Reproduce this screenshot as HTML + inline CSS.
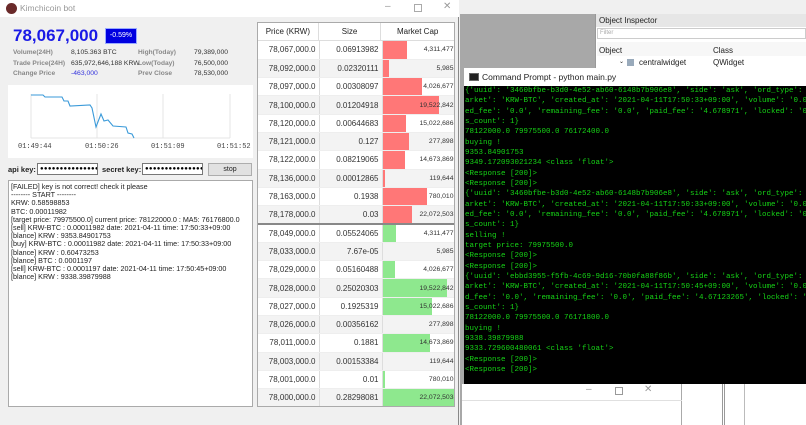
<!DOCTYPE html>
<html><head><meta charset="utf-8"><style>
*{margin:0;padding:0;box-sizing:border-box}
body{width:806px;height:425px;overflow:hidden;position:relative;background:#f0f0f0;font-family:"Liberation Sans",sans-serif}
.a{position:absolute}
.cmd div{height:10.33px;line-height:10.33px;white-space:pre;font-family:"Liberation Mono",monospace;font-size:7.5px;color:#16d416}
.lbl{font-size:6.6px;color:#888;font-weight:bold;white-space:nowrap}
.val{font-size:6.8px;color:#333;white-space:nowrap}
.log div{font-size:7.2px;line-height:8.2px;color:#222;white-space:pre}
table{border-collapse:collapse;font-size:8px;color:#333;table-layout:fixed}
td{height:18.3px;border-right:1px solid #ddd;border-bottom:1px solid #eee;padding:0 3px 0 0;text-align:right;position:relative;white-space:nowrap;overflow:hidden}
tr:nth-child(even) td{background:#f3f3f3}
td.mc{font-size:6.8px;padding-right:1px}
.bar{position:absolute;left:0;top:0;bottom:0}
.mc span{position:relative}
</style></head><body>
<div class="a" style="left:460px;top:0;width:346px;height:14px;background:#f0f0f0"></div>
<div class="a" style="left:460px;top:14px;width:135px;height:411px;background:#a8a8a8"></div>
<div class="a" style="left:595px;top:14px;width:211px;height:411px;background:#fff;border-left:1px solid #999"></div>
<div class="a" style="left:596px;top:14px;width:210px;height:13px;background:#e6e6e6;font-size:8px;padding:2px 3px;color:#222">Object Inspector</div>
<div class="a" style="left:597px;top:28px;width:209px;height:11px;border:1px solid #ccc;font-size:6px;color:#aaa;padding:1px 2px">Filter</div>
<div class="a" style="left:597px;top:42px;width:209px;height:14px;background:#f7f7f7;font-size:8px;color:#222"><span class="a" style="left:2px;top:4px">Object</span><span class="a" style="left:116px;top:4px">Class</span></div>
<div class="a" style="left:597px;top:56px;width:209px;height:12px;font-size:8px;color:#222"><span class="a" style="left:22px;top:2px;font-size:6px">⌄</span><span class="a" style="left:30px;top:3px;width:7px;height:7px;background:#9ab"></span><span class="a" style="left:42px;top:2px">centralwidget</span><span class="a" style="left:116px;top:2px">QWidget</span></div>
<div class="a" style="left:722px;top:384px;width:3px;height:41px;border-left:1px solid #999;border-right:1px solid #999"></div>
<div class="a" style="left:744px;top:384px;width:1px;height:41px;background:#bbb"></div>
<div class="a" style="left:462px;top:384px;width:220px;height:41px;background:#fff;border-right:1px solid #aaa"></div>
<div class="a" style="left:462px;top:384px;width:220px;height:17px;border-bottom:1px solid #e0e0e0;font-size:10px;color:#999"><span class="a" style="left:124px;top:0">–</span><span class="a" style="left:153px;top:3px;width:8px;height:8px;border:1px solid #999"></span><span class="a" style="left:182px;top:0">✕</span></div>
<div class="a" style="left:464px;top:68px;width:342px;height:18px;background:#fff;font-size:8.5px;color:#222;padding:4px 0 0 18px">Command Prompt - python  main.py<span class="a" style="left:5px;top:5px;width:10px;height:8px;background:#222;border:1px solid #666"></span></div>
<div class="a cmd" style="left:464px;top:86px;width:342px;height:298px;background:#000;padding:0 0 0 1px;overflow:hidden">
<div>{'uuid': '3460bfbe-b3d0-4e52-ab60-6148b7b906e8', 'side': 'ask', 'ord_type': '</div>
<div>arket': 'KRW-BTC', 'created_at': '2021-04-11T17:50:33+09:00', 'volume': '0.00</div>
<div>ed_fee': '0.0', 'remaining_fee': '0.0', 'paid_fee': '4.678971', 'locked': '0.</div>
<div>s_count': 1}</div>
<div>78122000.0 79975500.0 76172400.0</div>
<div>buying !</div>
<div>9353.84901753</div>
<div>9349.172093021234 &lt;class 'float'&gt;</div>
<div>&lt;Response [200]&gt;</div>
<div>&lt;Response [200]&gt;</div>
<div>{'uuid': '3460bfbe-b3d0-4e52-ab60-6148b7b906e8', 'side': 'ask', 'ord_type': '</div>
<div>arket': 'KRW-BTC', 'created_at': '2021-04-11T17:50:33+09:00', 'volume': '0.00</div>
<div>ed_fee': '0.0', 'remaining_fee': '0.0', 'paid_fee': '4.678971', 'locked': '0.</div>
<div>s_count': 1}</div>
<div>selling !</div>
<div>target price: 79975500.0</div>
<div>&lt;Response [200]&gt;</div>
<div>&lt;Response [200]&gt;</div>
<div>{'uuid': 'ebbd3955-f5fb-4c69-9d16-70b0fa88f86b', 'side': 'ask', 'ord_type': '</div>
<div>arket': 'KRW-BTC', 'created_at': '2021-04-11T17:50:45+09:00', 'volume': '0.00</div>
<div>d_fee': '0.0', 'remaining_fee': '0.0', 'paid_fee': '4.67123265', 'locked': '0</div>
<div>s_count': 1}</div>
<div>78122000.0 79975500.0 76171800.0</div>
<div>buying !</div>
<div>9338.39879988</div>
<div>9333.729600480061 &lt;class 'float'&gt;</div>
<div>&lt;Response [200]&gt;</div>
<div>&lt;Response [200]&gt;</div>
</div>
<div class="a" style="left:0;top:0;width:459px;height:425px;background:#f0f0f0;border-right:1px solid #888"></div>
<div class="a" style="left:0;top:0;width:459px;height:17px;background:#fff;font-size:8.5px;color:#999"><span class="a" style="left:6px;top:3px;width:11px;height:11px;border-radius:50%;background:#6a2a2a"></span><span class="a" style="left:20px;top:3px">Kimchicoin bot</span><span class="a" style="left:385px;top:1px;font-size:10px">–</span><span class="a" style="left:414px;top:4px;width:8px;height:8px;border:1px solid #aaa"></span><span class="a" style="left:443px;top:1px;font-size:10px">✕</span></div>
<div class="a" style="left:13px;top:26px;font-size:17px;font-weight:bold;color:#1a1ae6;white-space:nowrap">78,067,000</div>
<div class="a" style="left:106px;top:29px;width:30px;height:14px;background:#0000e0;color:#fff;font-size:7px;text-align:center;line-height:14px;outline:1px solid #9af">-0.59%</div>
<div class="a lbl" style="left:13px;top:49px">Volume(24H)</div><div class="a val" style="left:71px;top:49px">8,105.363 BTC</div>
<div class="a lbl" style="left:138px;top:49px">High(Today)</div><div class="a val" style="left:194px;top:49px">79,389,000</div>
<div class="a lbl" style="left:13px;top:60px">Trade Price(24H)</div><div class="a val" style="left:71px;top:60px">635,972,646,188 KRW</div>
<div class="a lbl" style="left:138px;top:60px">Low(Today)</div><div class="a val" style="left:194px;top:60px">76,500,000</div>
<div class="a lbl" style="left:13px;top:70px">Change Price</div><div class="a val" style="left:71px;top:70px;color:#33d">-463,000</div>
<div class="a lbl" style="left:138px;top:70px">Prev Close</div><div class="a val" style="left:194px;top:70px">78,530,000</div>
<svg class="a" style="left:8px;top:85px" width="245" height="73" viewBox="8 85 245 73">
<rect x="8" y="85" width="245" height="73" fill="#fff"/>
<g stroke="#e4e4e4" stroke-width="1"><line x1="31" y1="94" x2="31" y2="138"/><line x1="97" y1="94" x2="97" y2="138"/><line x1="163" y1="94" x2="163" y2="138"/><line x1="230" y1="94" x2="230" y2="138"/><line x1="31" y1="138" x2="230" y2="138"/></g>
<polyline fill="none" stroke="#3a9ad9" stroke-width="1.1" points="31,95 43,95 45,97 62,97 64,101 68,101 70,106 90,105 92,108 96,127 101,114 104,121 108,120 113,126 126,127 128,133 132,134 134,138"/>
<g font-family="Liberation Mono,monospace" font-size="7" fill="#444"><text x="18" y="148">01:49:44</text><text x="85" y="148">01:50:26</text><text x="151" y="148">01:51:09</text><text x="217" y="148">01:51:52</text></g>
</svg>
<div class="a" style="left:8px;top:165px;font-size:7.5px;font-weight:bold;color:#222">api key:</div>
<div class="a" style="left:37px;top:163px;width:61px;height:12px;background:#fff;border:1px solid #777;font-size:6px;line-height:10px;padding-left:2px;letter-spacing:.3px;overflow:hidden">●●●●●●●●●●●●●●●</div>
<div class="a" style="left:102px;top:165px;font-size:7.5px;font-weight:bold;color:#222">secret key:</div>
<div class="a" style="left:142px;top:163px;width:61px;height:12px;background:#fff;border:1px solid #777;font-size:6px;line-height:10px;padding-left:2px;letter-spacing:.3px;overflow:hidden">●●●●●●●●●●●●●●●</div>
<div class="a" style="left:208px;top:163px;width:44px;height:13px;background:#e1e1e1;border:1px solid #adadad;font-size:7px;text-align:center;line-height:11px;color:#222">stop</div>
<div class="a log" style="left:8px;top:180px;width:245px;height:227px;background:#fff;border:1px solid #aaa;padding:2px 2px">
<div>[FAILED] key is not correct! check it please</div>
<div>-------- START --------</div>
<div>KRW: 0.58598853</div>
<div>BTC: 0.00011982</div>
<div>[target price: 79975500.0] current price: 78122000.0 : MA5: 76176800.0</div>
<div>[sell] KRW-BTC : 0.00011982 date: 2021-04-11 time: 17:50:33+09:00</div>
<div>[blance] KRW : 9353.84901753</div>
<div>[buy] KRW-BTC : 0.00011982 date: 2021-04-11 time: 17:50:33+09:00</div>
<div>[blance] KRW : 0.60473253</div>
<div>[blance] BTC : 0.0001197</div>
<div>[sell] KRW-BTC : 0.0001197 date: 2021-04-11 time: 17:50:45+09:00</div>
<div>[blance] KRW : 9338.39879988</div>
</div>
<div class="a" style="left:257px;top:22px;width:198px;height:385px;background:#fff;border:1px solid #aaa;overflow:hidden">
<div style="height:18px;display:flex;font-size:8px;color:#222;border-bottom:1px solid #ddd"><div style="width:61px;text-align:center;line-height:18px;border-right:1px solid #ddd">Price (KRW)</div><div style="width:63px;text-align:center;line-height:18px;border-right:1px solid #ddd">Size</div><div style="width:73px;text-align:center;line-height:18px">Market Cap</div></div>
<table style="width:197px">
<colgroup><col style="width:61px"><col style="width:63px"><col style="width:73px"></colgroup>
<tbody>
<tr><td>78,067,000.0</td><td>0.06913982</td><td class="mc"><div class="bar" style="width:24px;background:#f77"></div><span>4,311,477</span></td></tr>
<tr><td>78,092,000.0</td><td>0.02320111</td><td class="mc"><div class="bar" style="width:6px;background:#f77"></div><span>5,985</span></td></tr>
<tr><td>78,097,000.0</td><td>0.00308097</td><td class="mc"><div class="bar" style="width:39px;background:#f77"></div><span>4,026,677</span></td></tr>
<tr><td>78,100,000.0</td><td>0.01204918</td><td class="mc"><div class="bar" style="width:56px;background:#f77"></div><span>19,522,842</span></td></tr>
<tr><td>78,120,000.0</td><td>0.00644683</td><td class="mc"><div class="bar" style="width:23px;background:#f77"></div><span>15,022,686</span></td></tr>
<tr><td>78,121,000.0</td><td>0.127</td><td class="mc"><div class="bar" style="width:26px;background:#f77"></div><span>277,898</span></td></tr>
<tr><td>78,122,000.0</td><td>0.08219065</td><td class="mc"><div class="bar" style="width:22px;background:#f77"></div><span>14,673,869</span></td></tr>
<tr><td>78,136,000.0</td><td>0.00012865</td><td class="mc"><div class="bar" style="width:2px;background:#f77"></div><span>119,644</span></td></tr>
<tr><td>78,163,000.0</td><td>0.1938</td><td class="mc"><div class="bar" style="width:44px;background:#f77"></div><span>780,010</span></td></tr>
<tr><td style="border-bottom:2px solid #888">78,178,000.0</td><td style="border-bottom:2px solid #888">0.03</td><td class="mc" style="border-bottom:2px solid #888"><div class="bar" style="width:29px;background:#f77"></div><span>22,072,503</span></td></tr>
<tr><td>78,049,000.0</td><td>0.05524065</td><td class="mc"><div class="bar" style="width:13px;background:#8ee88e"></div><span>4,311,477</span></td></tr>
<tr><td>78,033,000.0</td><td>7.67e-05</td><td class="mc"><span>5,985</span></td></tr>
<tr><td>78,029,000.0</td><td>0.05160488</td><td class="mc"><div class="bar" style="width:12px;background:#8ee88e"></div><span>4,026,677</span></td></tr>
<tr><td>78,028,000.0</td><td>0.25020303</td><td class="mc"><div class="bar" style="width:64px;background:#8ee88e"></div><span>19,522,842</span></td></tr>
<tr><td>78,027,000.0</td><td>0.1925319</td><td class="mc"><div class="bar" style="width:49px;background:#8ee88e"></div><span>15,022,686</span></td></tr>
<tr><td>78,026,000.0</td><td>0.00356162</td><td class="mc"><span>277,898</span></td></tr>
<tr><td>78,011,000.0</td><td>0.1881</td><td class="mc"><div class="bar" style="width:47px;background:#8ee88e"></div><span>14,673,869</span></td></tr>
<tr><td>78,003,000.0</td><td>0.00153384</td><td class="mc"><span>119,644</span></td></tr>
<tr><td>78,001,000.0</td><td>0.01</td><td class="mc"><div class="bar" style="width:2px;background:#8ee88e"></div><span>780,010</span></td></tr>
<tr><td>78,000,000.0</td><td>0.28298081</td><td class="mc"><div class="bar" style="width:73px;background:#8ee88e"></div><span>22,072,503</span></td></tr>
</tbody></table>
</div>
</body></html>
